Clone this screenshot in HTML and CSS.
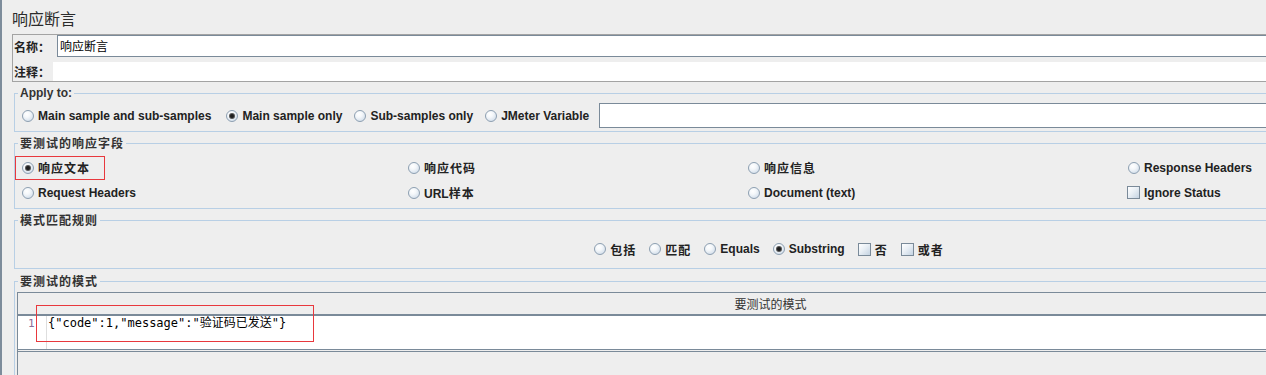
FILE: index.html
```html
<!DOCTYPE html>
<html lang="zh">
<head>
<meta charset="utf-8">
<title>响应断言</title>
<link rel="stylesheet" href="styles.css">
</head>
<body>
<div class="page">
 <div class="inner">
  <h1 class="title">响应断言</h1>

  <div class="namebox">
    <div class="nrow">
      <span class="nlabel">名称：</span>
      <div class="ninput">响应断言</div>
    </div>
    <div class="nrow nrow2">
      <span class="nlabel">注释：</span>
      <div class="narea"></div>
    </div>
  </div>

  <fieldset class="group">
    <legend>Apply to:</legend>
    <div class="apply">
      <span class="opt"><span class="radio"></span><span>Main sample and sub-samples</span></span>
      <span class="opt"><span class="radio on"></span><span>Main sample only</span></span>
      <span class="opt"><span class="radio"></span><span>Sub-samples only</span></span>
      <span class="opt"><span class="radio"></span><span>JMeter Variable</span></span>
      <div class="varfield"></div>
    </div>
  </fieldset>

  <fieldset class="group">
    <legend class="cjk">要测试的响应字段</legend>
    <div class="fields">
      <span class="opt cell-mark"><span class="radio on"></span><span class="cjk">响应文本</span><span class="mark"></span></span>
      <span class="opt"><span class="radio"></span><span class="cjk">响应代码</span></span>
      <span class="opt"><span class="radio"></span><span class="cjk">响应信息</span></span>
      <span class="opt"><span class="radio"></span><span>Response Headers</span></span>
      <span class="opt"><span class="radio"></span><span>Request Headers</span></span>
      <span class="opt"><span class="radio"></span><span>URL<span class="cjk">样本</span></span></span>
      <span class="opt"><span class="radio"></span><span>Document (text)</span></span>
      <span class="opt"><span class="check"></span><span>Ignore Status</span></span>
    </div>
  </fieldset>

  <fieldset class="group">
    <legend class="cjk">模式匹配规则</legend>
    <div class="rules">
      <span class="opt"><span class="radio"></span><span class="cjk">包括</span></span>
      <span class="opt"><span class="radio"></span><span class="cjk">匹配</span></span>
      <span class="opt"><span class="radio"></span><span>Equals</span></span>
      <span class="opt"><span class="radio on"></span><span>Substring</span></span>
      <span class="opt"><span class="check"></span><span class="cjk">否</span></span>
      <span class="opt"><span class="check"></span><span class="cjk">或者</span></span>
    </div>
  </fieldset>

  <fieldset class="group last">
    <legend class="cjk">要测试的模式</legend>
    <div class="table">
      <div class="thead">要测试的模式</div>
      <div class="editor">
        <div class="gutter">1</div>
        <div class="code">{"code":1,"message":"验证码已发送"}</div>
      </div>
      <div class="tfoot"></div>
      <span class="codemark"></span>
    </div>
  </fieldset>
 </div>
</div>
</body>
</html>
```

FILE: styles.css
```css
html, body {
  margin: 0;
  padding: 0;
  overflow: hidden;
  background: #eeeeee;
}

.page {
  border-left: 2px solid #7d8c9b;
  padding-left: 10px;
  width: 1254px;
  height: 375px;
  overflow: hidden;
  font-family: "Liberation Sans", "Noto Sans CJK SC", sans-serif;
  font-size: 12px;
  color: #222;
}

.inner {
  width: 1512px;
}

.title {
  margin: 0;
  padding-top: 8px;
  height: 20px;
  line-height: 20px;
  font-size: 16px;
  font-weight: normal;
  color: #2b2b2b;
  font-family: "Noto Sans CJK SC", sans-serif;
}

.namebox {
  margin-top: 6px;
  border: 1px solid #a3a3a3;
  height: 46px;
}

.nrow {
  display: flex;
  height: 22px;
  align-items: center;
}

.nrow2 {
  margin-top: 5px;
  height: 19px;
}

.nlabel {
  font-family: "Noto Sans CJK SC", sans-serif;
  font-weight: bold;
  font-size: 12px;
  padding-left: 1px;
  width: 43px;
  color: #222;
}

.nrow2 .nlabel {
  width: 39px;
}

.ninput {
  flex: 1;
  height: 22px;
  box-sizing: border-box;
  border: 1px solid #7a8a99;
  border-right: none;
  background: #fff;
  padding-left: 2px;
  font-family: "Noto Sans CJK SC", sans-serif;
  font-size: 12px;
  line-height: 20px;
  color: #000;
}

.narea {
  flex: 1;
  height: 19px;
  background: #fff;
}

.group {
  margin: 4px 0 0 2px;
  padding: 0;
  border: 1px solid #b8cfe5;
  min-width: 0;
}

.group legend {
  margin-left: 3px;
  padding: 0 2px;
  font-weight: bold;
  font-size: 12px;
  line-height: 14px;
  color: #333;
}

.cjk {
  font-family: "Noto Sans CJK SC", sans-serif;
  letter-spacing: 1px;
}

.opt {
  display: inline-flex;
  align-items: center;
  gap: 4px;
  font-weight: bold;
  white-space: nowrap;
  height: 25px;
}

.radio {
  width: 12px;
  height: 12px;
  box-sizing: border-box;
  border-radius: 50%;
  border: 1px solid #8d9fb1;
  background: radial-gradient(circle at 38% 32%, #ffffff 0%, #f4f7fa 35%, #c6d5e5 100%);
  display: inline-grid;
  place-items: center;
  flex: none;
}

.radio.on::after {
  content: "";
  width: 4px;
  height: 4px;
  border-radius: 50%;
  background: #1e1e1e;
  box-shadow: 0 0 0 1px #555;
}

.check {
  width: 13px;
  height: 13px;
  box-sizing: border-box;
  border: 1px solid #7a8a99;
  background: linear-gradient(135deg, #ffffff 0%, #e9eff5 45%, #c4d3e2 100%);
  flex: none;
}

/* Apply to */
.apply {
  display: flex;
  align-items: center;
  gap: 12px;
  padding: 3px 0 3px 7px;
}

.apply .opt:first-child {
  margin-right: 3px;
}

.varfield {
  flex: 1;
  height: 25px;
  box-sizing: border-box;
  border: 1px solid #7a8a99;
  border-right: none;
  background: #fff;
  margin-left: -2px;
}

/* response fields */
.fields {
  display: grid;
  grid-template-columns: 386px 340px 380px auto;
  grid-auto-rows: 25px;
  padding: 5px 0 3px 7px;
}

.fields .opt:nth-child(8) {
  margin-left: -1px;
}

.cell-mark {
  position: relative;
}

.mark {
  position: absolute;
  left: -7px;
  top: 1px;
  width: 90px;
  height: 24px;
  box-sizing: border-box;
  border: 1px solid #e8383d;
}

/* rules */
.rules {
  display: flex;
  justify-content: center;
  gap: 13px;
  padding: 12px 0 9px;
}

.rules .opt {
  height: 20px;
}

/* pattern table */
.group.last {
  margin-top: 5px;
  height: 100px;
}

.table {
  position: relative;
  margin: 4px 0 0 2px;
  border-top: 1px solid #7a8a99;
  border-left: 1px solid #7a8a99;
  height: 90px;
}

.thead {
  height: 21px;
  line-height: 21px;
  text-align: center;
  border-bottom: 2px solid #7a8a99;
  font-family: "Noto Sans CJK SC", sans-serif;
  font-size: 12px;
  color: #333;
}

.editor {
  display: flex;
  height: 33px;
  background: #fff;
  border-bottom: 1px solid #7a8a99;
}

.gutter {
  width: 29px;
  box-sizing: border-box;
  padding-left: 10px;
  border-right: 1px solid #dedede;
  font-family: "DejaVu Sans Mono", monospace;
  font-size: 11px;
  line-height: 15px;
  color: #8b6d97;
}

.code {
  padding-left: 1px;
  font-family: "DejaVu Sans Mono", "Noto Sans CJK SC", monospace;
  font-size: 12px;
  line-height: 15px;
  color: #000;
  white-space: pre;
}

.tfoot {
  margin-top: 1px;
  border-top: 1px solid #7a8a99;
}

.codemark {
  position: absolute;
  left: 18px;
  top: 12px;
  width: 278px;
  height: 37px;
  box-sizing: border-box;
  border: 1px solid #e8383d;
}
```
